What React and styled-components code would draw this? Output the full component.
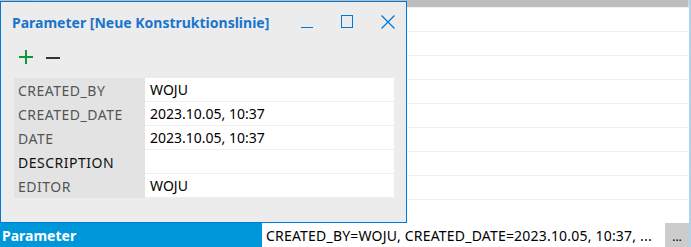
import React from 'react'
import styled, { createGlobalStyle } from 'styled-components'

const GlobalStyle = createGlobalStyle`
  html, body {
    margin: 0;
    padding: 0;
    background: #ffffff;
    overflow: hidden;
  }
  body {
    font-family: "Noto Sans", "Open Sans", sans-serif;
  }
`

const rows = [
  { name: 'CREATED_BY', value: 'WOJU' },
  { name: 'CREATED_DATE', value: '2023.10.05, 10:37' },
  { name: 'DATE', value: '2023.10.05, 10:37' },
  { name: 'DESCRIPTION', value: '', strong: true },
  { name: 'EDITOR', value: 'WOJU' },
]

export default function App() {
  return (
    <>
      <GlobalStyle />
      <Page>
        <Sheet>
          <HeaderBar>
            <HeaderCell $w={37} />
            <HeaderCell />
          </HeaderBar>
          {Array.from({ length: 9 }).map((_, i) => (
            <EmptyRow key={i} />
          ))}
          <ParamRow>
            <ParamLabel>Parameter</ParamLabel>
            <ParamValue>CREATED_BY=WOJU, CREATED_DATE=2023.10.05, 10:37, ...</ParamValue>
            <MoreButton>...</MoreButton>
          </ParamRow>
        </Sheet>
        <SideStrip />

        <Window>
          <TitleBar>
            <Title>Parameter [Neue Konstruktionslinie]</Title>
            <WinButtons>
              <WinButton>
                <svg width="14" height="14" viewBox="0 0 14 14">
                  <path d="M0 12.5h12" stroke="#0078d7" strokeWidth="1" fill="none" />
                </svg>
              </WinButton>
              <WinButton $gap={25}>
                <svg width="14" height="14" viewBox="0 0 14 14">
                  <rect x="1.5" y="0.5" width="11" height="12" stroke="#0078d7" strokeWidth="1" fill="none" />
                </svg>
              </WinButton>
              <WinButton $gap={27}>
                <svg width="14" height="14" viewBox="0 0 14 14">
                  <path d="M0.5 0.5l13 13M13.5 0.5l-13 13" stroke="#0078d7" strokeWidth="1.3" fill="none" />
                </svg>
              </WinButton>
            </WinButtons>
          </TitleBar>
          <Toolbar>
            <ToolButton>
              <svg width="14" height="14" viewBox="0 0 14 14">
                <path d="M7 0v14M0 7h14" stroke="#0a9a3a" strokeWidth="2" fill="none" />
              </svg>
            </ToolButton>
            <ToolButton>
              <svg width="14" height="14" viewBox="0 0 14 14">
                <path d="M0 8h14" stroke="#333333" strokeWidth="2" fill="none" />
              </svg>
            </ToolButton>
          </Toolbar>
          <Grid>
            {rows.map((r) => (
              <React.Fragment key={r.name}>
                <NameCell $strong={r.strong}>{r.name}</NameCell>
                <ValueCell>{r.value}</ValueCell>
              </React.Fragment>
            ))}
          </Grid>
        </Window>
      </Page>
    </>
  )
}

const Page = styled.div`
  position: relative;
  width: 691px;
  height: 247px;
  display: grid;
  grid-template-columns: 1fr 2px;
  overflow: hidden;
`

const Sheet = styled.div`
  display: flex;
  flex-direction: column;
`

const HeaderBar = styled.div`
  height: 7px;
  display: flex;
  background: #bdbdbd;
`

const HeaderCell = styled.div`
  width: ${(p) => (p.$w ? `${p.$w}px` : 'auto')};
  flex: ${(p) => (p.$w ? 'none' : '1')};
  border-right: 1px solid #d6d6d6;
`

const EmptyRow = styled.div`
  height: 23px;
  border-top: 1px solid #efefef;
  background: #ffffff;
`

const ParamRow = styled.div`
  height: 24px;
  display: grid;
  grid-template-columns: 262px 1fr 24px;
  font-size: 14px;
`

const ParamLabel = styled.div`
  background: #0096da;
  color: #ffffff;
  font-weight: 700;
  padding-left: 2px;
  display: flex;
  align-items: center;
`

const ParamValue = styled.div`
  background: #ffffff;
  color: #000000;
  padding-left: 4px;
  letter-spacing: 0.2px;
  display: flex;
  align-items: center;
  white-space: nowrap;
  overflow: hidden;
`

const MoreButton = styled.div`
  background: #cccccc;
  color: #000000;
  font-size: 12px;
  display: flex;
  align-items: center;
  justify-content: center;
  padding-top: 2px;
`

const SideStrip = styled.div`
  background: #afd3ea;
`

const Window = styled.div`
  position: absolute;
  left: 0;
  top: 1px;
  width: 407px;
  height: 222px;
  box-sizing: border-box;
  border: 1px solid #0078d7;
  background: #ececec;
  display: flex;
  flex-direction: column;
`

const TitleBar = styled.div`
  height: 30px;
  box-sizing: border-box;
  display: flex;
  align-items: flex-start;
  justify-content: space-between;
  padding: 12px 11px 0 11px;
`

const Title = styled.div`
  color: #1a74cc;
  font-weight: 700;
  font-size: 14px;
  line-height: 18px;
`

const WinButtons = styled.div`
  display: flex;
  padding-top: 1px;
`

const WinButton = styled.div`
  display: flex;
  margin-left: ${(p) => (p.$gap ? `${p.$gap}px` : '0')};
`

const Toolbar = styled.div`
  display: flex;
  gap: 13px;
  padding: 18px 0 0 18px;
  height: 32px;
  box-sizing: border-box;
`

const ToolButton = styled.div`
  display: flex;
`

const Grid = styled.div`
  margin: 14px 0 0 13px;
  width: 380px;
  display: grid;
  grid-template-columns: 131px 1fr;
  grid-auto-rows: 24px;
  font-size: 14px;
`

const NameCell = styled.div`
  background: #e3e3e3;
  color: ${(p) => (p.$strong ? '#111111' : '#555555')};
  padding-left: 4px;
  letter-spacing: 0.5px;
  display: flex;
  align-items: center;
`

const ValueCell = styled.div`
  background: #ffffff;
  color: #000000;
  padding-left: 5px;
  display: flex;
  align-items: center;
  border-bottom: 1px solid #eeeeee;
  box-sizing: border-box;
`
